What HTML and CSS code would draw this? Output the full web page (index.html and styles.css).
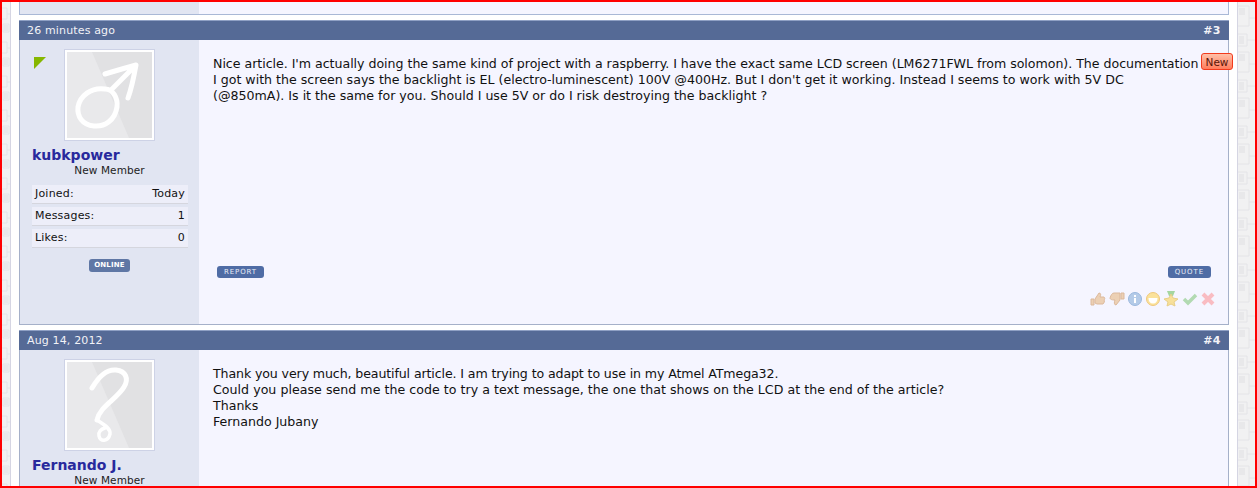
FILE: index.html
```html
<!DOCTYPE html>
<html lang="en">
<head>
  <meta charset="UTF-8">
  <title>Comments</title>
  <link rel="stylesheet" href="styles.css">
</head>
<body>
  <div class="frame">
    <div class="strip strip-left">
      <svg width="100%" height="100%">
        <defs>
          <pattern id="bracketsLeft" width="9" height="34" patternUnits="userSpaceOnUse">
            <path class="bracket" d="M0 6H5V12H9M5 12V17H0M1 22H7V30H1Z"/>
            <path class="bracket-fill" d="M2 23H6V29H2Z"/>
          </pattern>
        </defs>
        <rect width="100%" height="100%" fill="url(#bracketsLeft)"/>
      </svg>
    </div>
    <div class="content">
      <!-- end of the previous post -->
      <div class="post-end"><div class="side"></div></div>

      <div class="post">
        <div class="post-head"><span>26 minutes ago</span><b>#3</b></div>
        <div class="post-body post-tall">
          <div class="side">
            <span class="corner"></span>
            <div class="avatar">
              <svg width="85" height="86" viewBox="0 0 85 86">
                <path class="shine" d="M0 0H25L62 86H0Z"/>
                <path class="glyph" d="M38 37C46 37 51 46 50 55C48 68 38 75 27 74C15 73 10 64 11 55C13 44 24 35 38 37"/>
                <path class="glyph" d="M44 38L68 14M38 22C48 19 58 16 69 13C67 24 65 35 61 46"/>
              </svg>
            </div>
            <a class="name">kubkpower</a>
            <div class="title">New Member</div>
            <dl class="stats">
              <div><dt>Joined:</dt><dd>Today</dd></div>
              <div><dt>Messages:</dt><dd>1</dd></div>
              <div><dt>Likes:</dt><dd>0</dd></div>
            </dl>
            <div class="online-row"><span class="online">ONLINE</span></div>
          </div>
          <div class="main">
            <span class="new-tag">New</span>
            <p class="message"><span class="tight">Nice article. I'm actually doing the same kind of project with a raspberry. I have the exact same LCD screen (LM6271FWL from solomon). The documentation</span><br>I got with the screen says the backlight is EL (electro-luminescent) 100V @400Hz. But I don't get it working. Instead I seems to work with 5V DC<br>(@850mA). Is it the same for you. Should I use 5V or do I risk destroying the backlight ?</p>
            <div class="actions"><a class="btn">REPORT</a><a class="btn">QUOTE</a></div>
            <div class="ratings">
              <svg width="16" height="16" viewBox="0 0 16 16"><path fill="#ecd0b4" stroke="#dcb99c" d="M1 8H4V14H1ZM5 8L9 2C11 2 11 4 10 6H14C15 7 15 8 14 9C15 10 14 12 13 13H7L5 12Z"/></svg>
              <svg width="16" height="16" viewBox="0 0 16 16"><path fill="#ecd0b4" stroke="#dcb99c" d="M12 2H15V8H12ZM11 2H5C3 2 2 4 1 7C1 8 2 9 6 9C5 11 5 14 7 14L11 9Z"/></svg>
              <svg width="16" height="16" viewBox="0 0 16 16"><circle cx="8" cy="8" r="6.5" fill="#b4cbe8" stroke="#9ab8de"/><path stroke="#fff" stroke-width="2" d="M8 7V12M8 4V6"/></svg>
              <svg width="16" height="16" viewBox="0 0 16 16"><circle cx="8" cy="8" r="6.5" fill="#fbe29a" stroke="#efc87e"/><path fill="#fff" d="M3.5 7H12.5C12.5 10.5 11 12.5 8 12.5C5 12.5 3.5 10.5 3.5 7Z"/></svg>
              <svg width="16" height="16" viewBox="0 0 16 16"><path fill="#a5d6a0" d="M4 0H12L10 5H6Z"/><path fill="#f7e09a" stroke="#e8cf88" d="M8 3L10 7L15 8L11 11L12 15L8 13L4 15L5 11L1 8L6 7Z"/></svg>
              <svg width="16" height="16" viewBox="0 0 16 16"><path fill="none" stroke="#b2dab2" stroke-width="3.5" d="M2 8L6 12L14 4"/></svg>
              <svg width="16" height="16" viewBox="0 0 16 16"><path stroke="#f9bcc2" stroke-width="4" d="M3 3L13 13M13 3L3 13"/></svg>
            </div>
          </div>
        </div>
      </div>

      <div class="post">
        <div class="post-head"><span>Aug 14, 2012</span><b>#4</b></div>
        <div class="post-body">
          <div class="side">
            <div class="avatar">
              <svg width="85" height="86" viewBox="0 0 85 86">
                <path class="shine" d="M0 0H25L62 86H0Z"/>
                <path class="glyph" d="M25 26C32 14 40 7 49 8C59 9 62 17 57 25C50 37 33 44 30 58"/>
                <path class="glyph thin" d="M30 58C36 62 44 66 43 72C41 80 33 80 32 74C31 70 34 67 38 66"/>
              </svg>
            </div>
            <a class="name">Fernando J.</a>
            <div class="title">New Member</div>
          </div>
          <div class="main">
            <p class="message"><span class="tighter">Thank you very much, beautiful article. I am trying to adapt to use in my Atmel ATmega32.</span><br><span class="loose">Could you please send me the code to try a text message, the one that shows on the LCD at the end of the article?</span><br>Thanks<br>Fernando Jubany</p>
          </div>
        </div>
      </div>
    </div>
    <div class="strip strip-right">
      <svg width="100%" height="100%">
        <defs>
          <pattern id="bracketsRight" width="17" height="46" patternUnits="userSpaceOnUse">
            <path class="bracket" d="M0 4H11V16H17M11 16V24H0M0 32H9V44H0M9 38H17"/>
            <path class="bracket-fill" d="M1 6H7V13H1ZM1 34H6V42H1Z"/>
          </pattern>
        </defs>
        <rect width="100%" height="100%" fill="url(#bracketsRight)"/>
      </svg>
    </div>
  </div>
</body>
</html>
```

FILE: styles.css
```css
/* General Styles */
html,
body {
  margin: 0;
  height: 100%;
  overflow: hidden;
}

body {
  font-family: 'DejaVu Sans', Verdana, sans-serif;
  font-size: 12.6px;
  color: #111;
  background-color: #fff;
}

.frame {
  box-sizing: border-box;
  display: flex;
  height: 488px;
  border: 2px solid #f00;
  overflow: hidden;
}

/* Patterned page background */
.strip {
  flex: none;
  background-color: #f1f1f2;
}

.strip svg {
  display: block;
}

.bracket {
  fill: none;
  stroke: #e4e4e7;
}

.bracket-fill {
  fill: #e8e8ea;
}

.strip-left {
  width: 8px;
  border-right: 1px solid #d5d5e3;
}

.strip-right {
  width: 17px;
  border-left: 1px solid #d5d5e3;
}

.content {
  flex: 1;
  padding: 0 8px;
  min-width: 0;
}

/* Posts */
.post-end {
  height: 12px;
  border: 1px solid #a9b8d6;
  border-top: none;
  background-color: #f5f5ff;
  margin-bottom: 5px;
}

.post-end .side {
  height: 100%;
}

.post {
  margin-bottom: 5px;
}

.post-head {
  display: flex;
  justify-content: space-between;
  align-items: center;
  height: 19px;
  padding: 0 8px;
  border-top: 1px solid #8fa0c4;
  background-color: #556a96;
  color: #f2f2f7;
  font-size: 11px;
  letter-spacing: 0.15px;
}

.post-head b {
  font-weight: bold;
  letter-spacing: 0.5px;
}

.post-body {
  display: flex;
  border: 1px solid #a5b0c9;
  border-top: none;
  background-color: #f5f5ff;
}

.post-tall {
  height: 284px;
}

.side {
  box-sizing: border-box;
  position: relative;
  width: 179px;
  flex: none;
  padding: 9px 12px 0;
  background-color: #e1e5f2;
}

.corner {
  position: absolute;
  left: 14px;
  top: 17px;
  border-top: 12px solid #86b700;
  border-right: 12px solid transparent;
}

.avatar {
  box-sizing: border-box;
  width: 91px;
  height: 92px;
  margin-left: 32px;
  border: 1px solid #cdd2e6;
  outline: 2px solid #fff;
  outline-offset: -3px;
  padding: 2px;
  background-color: #e1e1e3;
}

.avatar svg {
  display: block;
}

.shine {
  fill: #e9e9eb;
}

.glyph {
  fill: none;
  stroke: #fff;
  stroke-width: 5;
  stroke-linecap: round;
  stroke-linejoin: round;
}

.glyph.thin {
  stroke-width: 3.5;
}

.name {
  display: block;
  margin-top: 5px;
  color: #28299d;
  font-size: 14px;
  font-weight: bold;
  line-height: 18px;
}

.title {
  margin-top: 0;
  text-align: center;
  font-size: 10.5px;
  line-height: 13px;
  letter-spacing: 0.1px;
  color: #222;
}

.stats {
  margin: 8px 0 0;
  width: 156px;
}

.stats div {
  display: flex;
  justify-content: space-between;
  height: 19px;
  margin-bottom: 3px;
  padding: 0 3px;
  background-color: #edeef9;
  border-bottom: 1px solid #d5d6de;
  box-sizing: border-box;
  font-size: 11px;
  line-height: 18px;
  letter-spacing: 0.2px;
}

.stats dt,
.stats dd {
  margin: 0;
}

.online-row {
  margin-top: 11px;
  text-align: center;
}

.online {
  display: inline-block;
  height: 13px;
  padding: 0 5px;
  border-radius: 3px;
  background-color: #5f77a5;
  color: #fff;
  font-size: 7px;
  font-weight: bold;
  line-height: 13px;
  letter-spacing: 0.2px;
  vertical-align: top;
}

/* Message area */
.main {
  position: relative;
  flex: 1;
  min-width: 0;
  padding: 16px 14px 0;
}

.message {
  margin: 0;
  line-height: 16px;
  white-space: nowrap;
}

/* line widths, to end where the original lines end */
.tight {
  letter-spacing: -0.03px;
}

.tighter {
  letter-spacing: -0.12px;
}

.loose {
  letter-spacing: 0.03px;
}

.new-tag {
  position: absolute;
  right: -5px;
  top: 13px;
  box-sizing: border-box;
  width: 32px;
  height: 17px;
  border: 1px solid #f23a1c;
  border-radius: 3px;
  background: linear-gradient(#ffc0a8, #ff7c5c);
  color: #5a1508;
  font-size: 10.5px;
  line-height: 17px;
  text-align: center;
}

.actions {
  position: absolute;
  left: 18px;
  right: 17px;
  top: 226px;
  display: flex;
  justify-content: space-between;
}

.btn {
  height: 12px;
  padding: 0 7px;
  border-radius: 3px;
  background-color: #4f6ca5;
  color: #e8ecf6;
  font-size: 7px;
  line-height: 12px;
  letter-spacing: 0.9px;
}

.ratings {
  position: absolute;
  right: 12px;
  top: 251px;
  display: flex;
  gap: 2.3px;
}
```
